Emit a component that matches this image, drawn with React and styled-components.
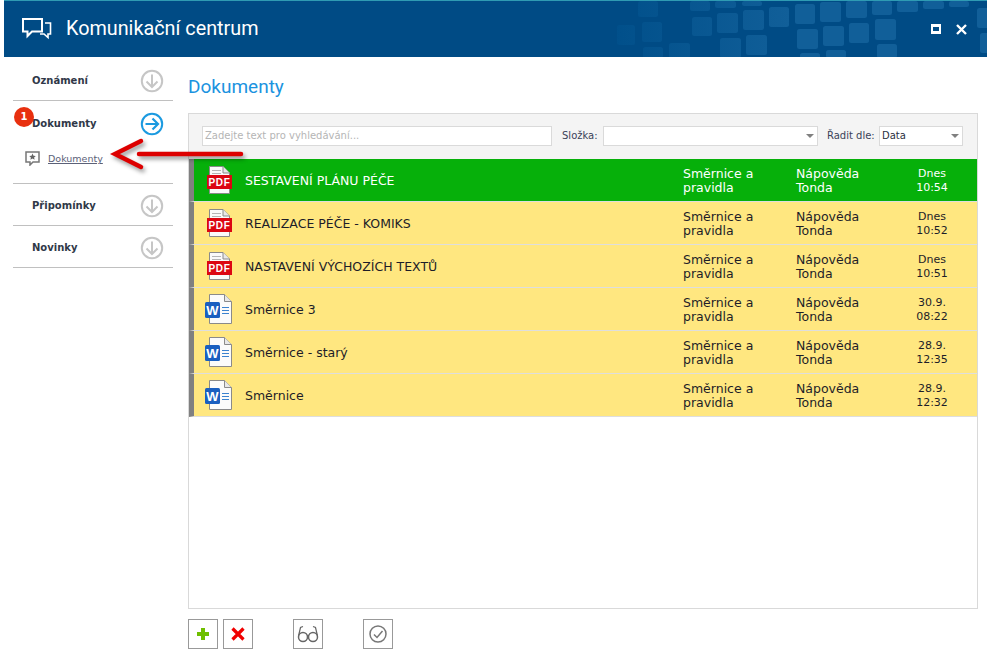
import React from "react";
import styled, { createGlobalStyle } from "styled-components";

const Global = createGlobalStyle`
  html, body { margin: 0; padding: 0; background: #fff; }
  body { width: 991px; height: 658px; overflow: hidden; font-family: "DejaVu Sans", sans-serif; }
  * { box-sizing: border-box; }
`;

const Page = styled.div`
  position: relative;
  width: 991px;
  height: 658px;
  padding: 0 4px;
  display: flex;
  flex-direction: column;
`;
const Header = styled.header`
  position: relative;
  height: 57px;
  flex: none;
  background: #004b85;
  border-top: 1px solid #2f9bb3;
  display: flex;
  align-items: center;
  padding: 0 20px 0 18px;
  overflow: hidden;
`;
const Pattern = styled.svg`
  position: absolute;
  left: 0;
  top: -1px;
`;
const ChatIcon = styled.svg`
  position: relative;
  flex: none;
`;
const HeaderTitle = styled.h1`
  position: relative;
  margin: 0 0 0 14px;
  font: 400 19.8px/1 Roboto, sans-serif;
  color: #fff;
  flex: 1;
`;
const WinButtons = styled.div`
  position: relative;
  display: flex;
  gap: 15px;
  align-items: center;
`;
const Body = styled.div`
  flex: 1;
  display: flex;
  padding-left: 9px;
`;
const Sidebar = styled.nav`
  width: 160px;
  flex: none;
`;
const NavItem = styled.div`
  position: relative;
  height: ${p => p.$h}px;
  border-bottom: 1px solid #c0c0c0;
`;
const NavHead = styled.div`
  height: ${p => (p.$first ? 44 : 43)}px;
  display: flex;
  align-items: center;
  justify-content: space-between;
  padding: ${p => (p.$first ? "3px" : p.$open ? "2px" : "1px")} 9px 0 19px;
  font: 700 10px/1 "DejaVu Sans", sans-serif;
  color: #303848;
`;
const Badge = styled.span`
  position: absolute;
  left: 1px;
  top: 6px;
  width: 20px;
  height: 20px;
  border-radius: 50%;
  background: #e8300f;
  color: #fff;
  font: 700 10px/20px "DejaVu Sans", sans-serif;
  text-align: center;
`;
const SubItem = styled.div`
  display: flex;
  align-items: center;
  gap: 8px;
  padding: 0 0 0 12px;
  height: 26px;
  margin-top: 1px;
`;
const SubLink = styled.a`
  font: 400 9.5px/1 "DejaVu Sans", sans-serif;
  color: #5b6178;
  text-decoration: underline;
  padding-top: 2px;
`;
const Main = styled.main`
  width: 790px;
  margin-left: 15px;
  display: flex;
  flex-direction: column;
`;
const Title = styled.h2`
  margin: 0;
  height: 56px;
  padding-top: 19px;
  font: 400 19px/22px Roboto, sans-serif;
  color: #1b93df;
`;
const Panel = styled.section`
  height: 496px;
  border: 1px solid #d9d9d9;
  display: flex;
  flex-direction: column;
`;
const Toolbar = styled.div`
  height: 45px;
  flex: none;
  background: #f4f4f4;
  display: flex;
  align-items: center;
  padding: 0 14px 2px 13px;
`;
const Field = styled.div`
  height: 20px;
  background: #fff;
  border: 1px solid #dadada;
  width: ${p => p.$w}px;
  flex: none;
  padding: 0 2px;
  font: 400 10px/18px "DejaVu Sans", sans-serif;
  color: ${p => (p.$muted ? "#b5b5b5" : "#2a3040")};
  display: flex;
  justify-content: space-between;
  align-items: center;
`;
const Caret = styled.span`
  width: 0;
  height: 0;
  border: 4px solid transparent;
  border-top: 4px solid #808080;
  border-bottom: 0;
  margin-right: 1px;
`;
const FieldLabel = styled.span`
  font: 400 10px/1 "DejaVu Sans", sans-serif;
  color: #3a4258;
  white-space: nowrap;
  width: ${p => p.$w}px;
  padding-left: ${p => p.$pad}px;
  flex: none;
`;
const Row = styled.div`
  height: 43px;
  flex: none;
  background: ${p => (p.$active ? "#06b00a" : "#ffe780")};
  color: ${p => (p.$active ? "#fff" : "#1d1d28")};
  border-left: 5px solid #808080;
  border-bottom: 1px solid #dedede;
  display: grid;
  grid-template-columns: 12px 26px 13px 438px 113px 100px 72px;
  align-items: center;
  font: 400 12.5px/14px "DejaVu Sans", sans-serif;
`;
const RowIcon = styled.div`
  grid-column: 2;
  height: 30px;
  display: flex;
  align-items: center;
`;
const WordSvg = styled.svg`
  margin-left: -1px;
  flex: none;
`;
const Name = styled.div`
  grid-column: 4;
  padding-top: 2px;
`;
const Cell = styled.div`
  white-space: pre-line;
  padding-top: 2px;
`;
const DateCell = styled.div`
  text-align: center;
  font-size: 11px;
  line-height: 14px;
  white-space: pre-line;
  padding-top: 2px;
`;
const Footer = styled.div`
  display: flex;
  margin-top: 10px;
`;
const ActionButton = styled.button`
  width: 30px;
  height: 30px;
  padding: 0;
  margin-left: ${p => p.$ml || 0}px;
  border: 1px solid #999;
  background: #fff;
  display: flex;
  align-items: center;
  justify-content: center;
`;
const Pointer = styled.svg`
  position: absolute;
  left: 100px;
  top: 130px;
  overflow: visible;
  filter: drop-shadow(2px 3px 2px rgba(0, 0, 0, 0.4));
`;

const tiles = [
  [638,1,20,16],[617,25,18,20],[642,22,20,20],[643,47,20,11],[669,43,21,15],
  [690,1,20,10],[715,1,21,7],[742,1,20,5],[692,17,20,19],[717,13,21,20],[743,10,21,20],[769,7,20,20],[795,4,20,20],[820,2,21,20],[846,1,21,17],[872,1,20,14],[897,1,21,11],[923,1,21,8],[949,1,20,6],
  [797,29,21,20],[823,26,21,20],[849,23,20,20],[875,19,21,21],[720,38,21,20],[746,35,21,20],[977,8,12,20],[980,33,10,20],[800,53,20,6],[826,50,20,8],[877,44,20,14],
];

const Arrow = ({ active }) => (
  <svg width="24" height="24" viewBox="0 0 24 24" fill="none" stroke={active ? "#1b9ae0" : "#c6c6c6"} strokeWidth="2">
    <circle cx="12" cy="12" r="10.2" />
    {active
      ? <path d="M5.500 12H18M12.500 6.500L18 12l-5.500 5.500" strokeWidth="2.200" />
      : <path d="M12 5.500V18M6.500 12.500L12 18l5.500-5.500" />}
  </svg>
);
const PdfIcon = () => (
  <svg width="26" height="30" viewBox="0 0 26 30">
    <path d="M3.500 1.500H17L23.500 8v20.500H3.500z" fill="#fafafa" stroke="#8a8a8a" />
    <path d="M17 1.500V8h6.500" fill="#e8e8e8" stroke="#8a8a8a" />
    <path d="M6 5.500h9M6 8.500h9" stroke="#b5b5b5" />
    <rect x="1" y="10" width="25" height="14" fill="#dc0612" />
    <text x="13.500" y="21" textAnchor="middle" fontFamily="Liberation Sans" fontWeight="700" fontSize="10" fill="#fff" letterSpacing=".7">PDF</text>
  </svg>
);
const WordIcon = () => (
  <WordSvg width="28" height="31" viewBox="0 0 28 31">
    <path d="M4.500.5H19.500L26.500 7.500v22H4.500z" fill="#fbfbfb" stroke="#8a8a8a" />
    <path d="M19.500.5V7.500h7" fill="#e8e8e8" stroke="#8a8a8a" />
    <path d="M17 13.500h7M17 16.500h7M17 19.500h7" stroke="#3b82cf" />
    <rect x="0" y="8" width="15" height="16" rx="1.500" fill="#1a5fc0" />
    <text x="7.500" y="21" textAnchor="middle" fontFamily="Liberation Sans" fontWeight="700" fontSize="13" fill="#fff">W</text>
  </WordSvg>
);

const rows = [
  { t: "SESTAVENÍ PLÁNU PÉČE", d: "Dnes\n10:54", pdf: 1, active: 1 },
  { t: "REALIZACE PÉČE - KOMIKS", d: "Dnes\n10:52", pdf: 1 },
  { t: "NASTAVENÍ VÝCHOZÍCH TEXTŮ", d: "Dnes\n10:51", pdf: 1 },
  { t: "Směrnice 3", d: "30.9.\n08:22" },
  { t: "Směrnice - starý", d: "28.9.\n12:35" },
  { t: "Směrnice", d: "28.9.\n12:32" },
];

export default function App() {
  return (
    <Page>
      <Global />
      <Header>
        <Pattern width="983" height="58" viewBox="4 0 983 58" fill="url(#tileFade)">
          <defs>
            <linearGradient id="tileFade" gradientUnits="userSpaceOnUse" x1="610" y1="0" x2="790" y2="0">
              <stop offset="0" stopColor="#004f8a" />
              <stop offset="1" stopColor="#115f99" />
            </linearGradient>
          </defs>
          {tiles.map(([x, y, w, h], i) => <rect key={i} x={x} y={y} width={w} height={h} rx="2.500" />)}
        </Pattern>
        <ChatIcon width="30" height="24" viewBox="0 0 30 24" fill="none" stroke="#fff" strokeWidth="2">
          <path d="M1 2h19v12.500H10L5.500 19v-4.500H1z" />
          <path d="M23 6h5.500v11H26v3.500L22 17h-4" strokeWidth="1.600" />
        </ChatIcon>
        <HeaderTitle>Komunikační centrum</HeaderTitle>
        <WinButtons>
          <svg width="10" height="10" viewBox="0 0 10 10"><path d="M0 0h10v10H0z" fill="#fff" /><path d="M2 3h6v4H2z" fill="#004b85" /></svg>
          <svg width="11" height="11" viewBox="0 0 11 11" stroke="#fff" strokeWidth="2.400"><path d="M1 1l9 9M10 1l-9 9" /></svg>
        </WinButtons>
      </Header>
      <Body>
        <Sidebar>
          <NavItem $h={44}>
            <NavHead $first>Oznámení<Arrow /></NavHead>
          </NavItem>
          <NavItem $h={83}>
            <Badge>1</Badge>
            <NavHead $open>Dokumenty<Arrow active /></NavHead>
            <SubItem>
              <svg width="15" height="15" viewBox="0 0 15 15">
                <path d="M1 1h13v10H8l-3 3v-3H1z" fill="none" stroke="#777" strokeWidth="1.500" />
                <path d="M7.500 2.500l1 2.200 2.300.2-1.700 1.500.5 2.300-2.100-1.200-2.100 1.200.5-2.300-1.700-1.500 2.300-.2z" fill="#666" />
              </svg>
              <SubLink>Dokumenty</SubLink>
            </SubItem>
          </NavItem>
          <NavItem $h={42}>
            <NavHead>Připomínky<Arrow /></NavHead>
          </NavItem>
          <NavItem $h={42}>
            <NavHead>Novinky<Arrow /></NavHead>
          </NavItem>
        </Sidebar>
        <Main>
          <Title>Dokumenty</Title>
          <Panel>
            <Toolbar>
              <Field $w={350} $muted>Zadejte text pro vyhledávání...</Field>
              <FieldLabel $w={51} $pad={10}>Složka:</FieldLabel>
              <Field $w={215}><span /><Caret /></Field>
              <FieldLabel $w={61} $pad={9}>Řadit dle:</FieldLabel>
              <Field $w={84}>Data<Caret /></Field>
            </Toolbar>
            {rows.map(r => (
              <Row key={r.t} $active={r.active}>
                <RowIcon>{r.pdf ? <PdfIcon /> : <WordIcon />}</RowIcon>
                <Name>{r.t}</Name>
                <Cell>{"Směrnice a\npravidla"}</Cell>
                <Cell>{"Nápověda\nTonda"}</Cell>
                <DateCell>{r.d}</DateCell>
              </Row>
            ))}
          </Panel>
          <Footer>
            <ActionButton>
              <svg width="14" height="14" viewBox="0 0 14 14"><path d="M5 1h4v4h4v4H9v4H5V9H1V5h4z" fill="#6fbf00" /></svg>
            </ActionButton>
            <ActionButton $ml={5}>
              <svg width="14" height="14" viewBox="0 0 14 14" stroke="#f00000" strokeWidth="3.200"><path d="M1.500 1.500l11 11M12.500 1.500l-11 11" /></svg>
            </ActionButton>
            <ActionButton $ml={40}>
              <svg width="22" height="18" viewBox="0 0 22 18" fill="none" stroke="#666" strokeWidth="1.500">
                <circle cx="6" cy="12" r="4.500" /><circle cx="16" cy="12" r="4.500" />
                <path d="M10 11c.8-.6 1.200-.6 2 0M1.500 11L3.500 2.500 6 1.500M20.500 11L18.500 2.500 16 1.500" strokeWidth="1.200" />
              </svg>
            </ActionButton>
            <ActionButton $ml={40}>
              <svg width="18" height="18" viewBox="0 0 18 18" fill="none" stroke="#777" strokeWidth="1.500">
                <circle cx="9" cy="9" r="8" /><path d="M5 9.500l3 3 5.500-6.500" />
              </svg>
            </ActionButton>
          </Footer>
        </Main>
      </Body>
      <Pointer width="150" height="50" viewBox="100 130 150 50" fill="none" stroke="#dd0000" strokeLinecap="round">
        <path d="M139 154H241" strokeWidth="4.500" />
        <path d="M141 141L115 154l26 13" strokeWidth="4.500" />
      </Pointer>
    </Page>
  );
}
